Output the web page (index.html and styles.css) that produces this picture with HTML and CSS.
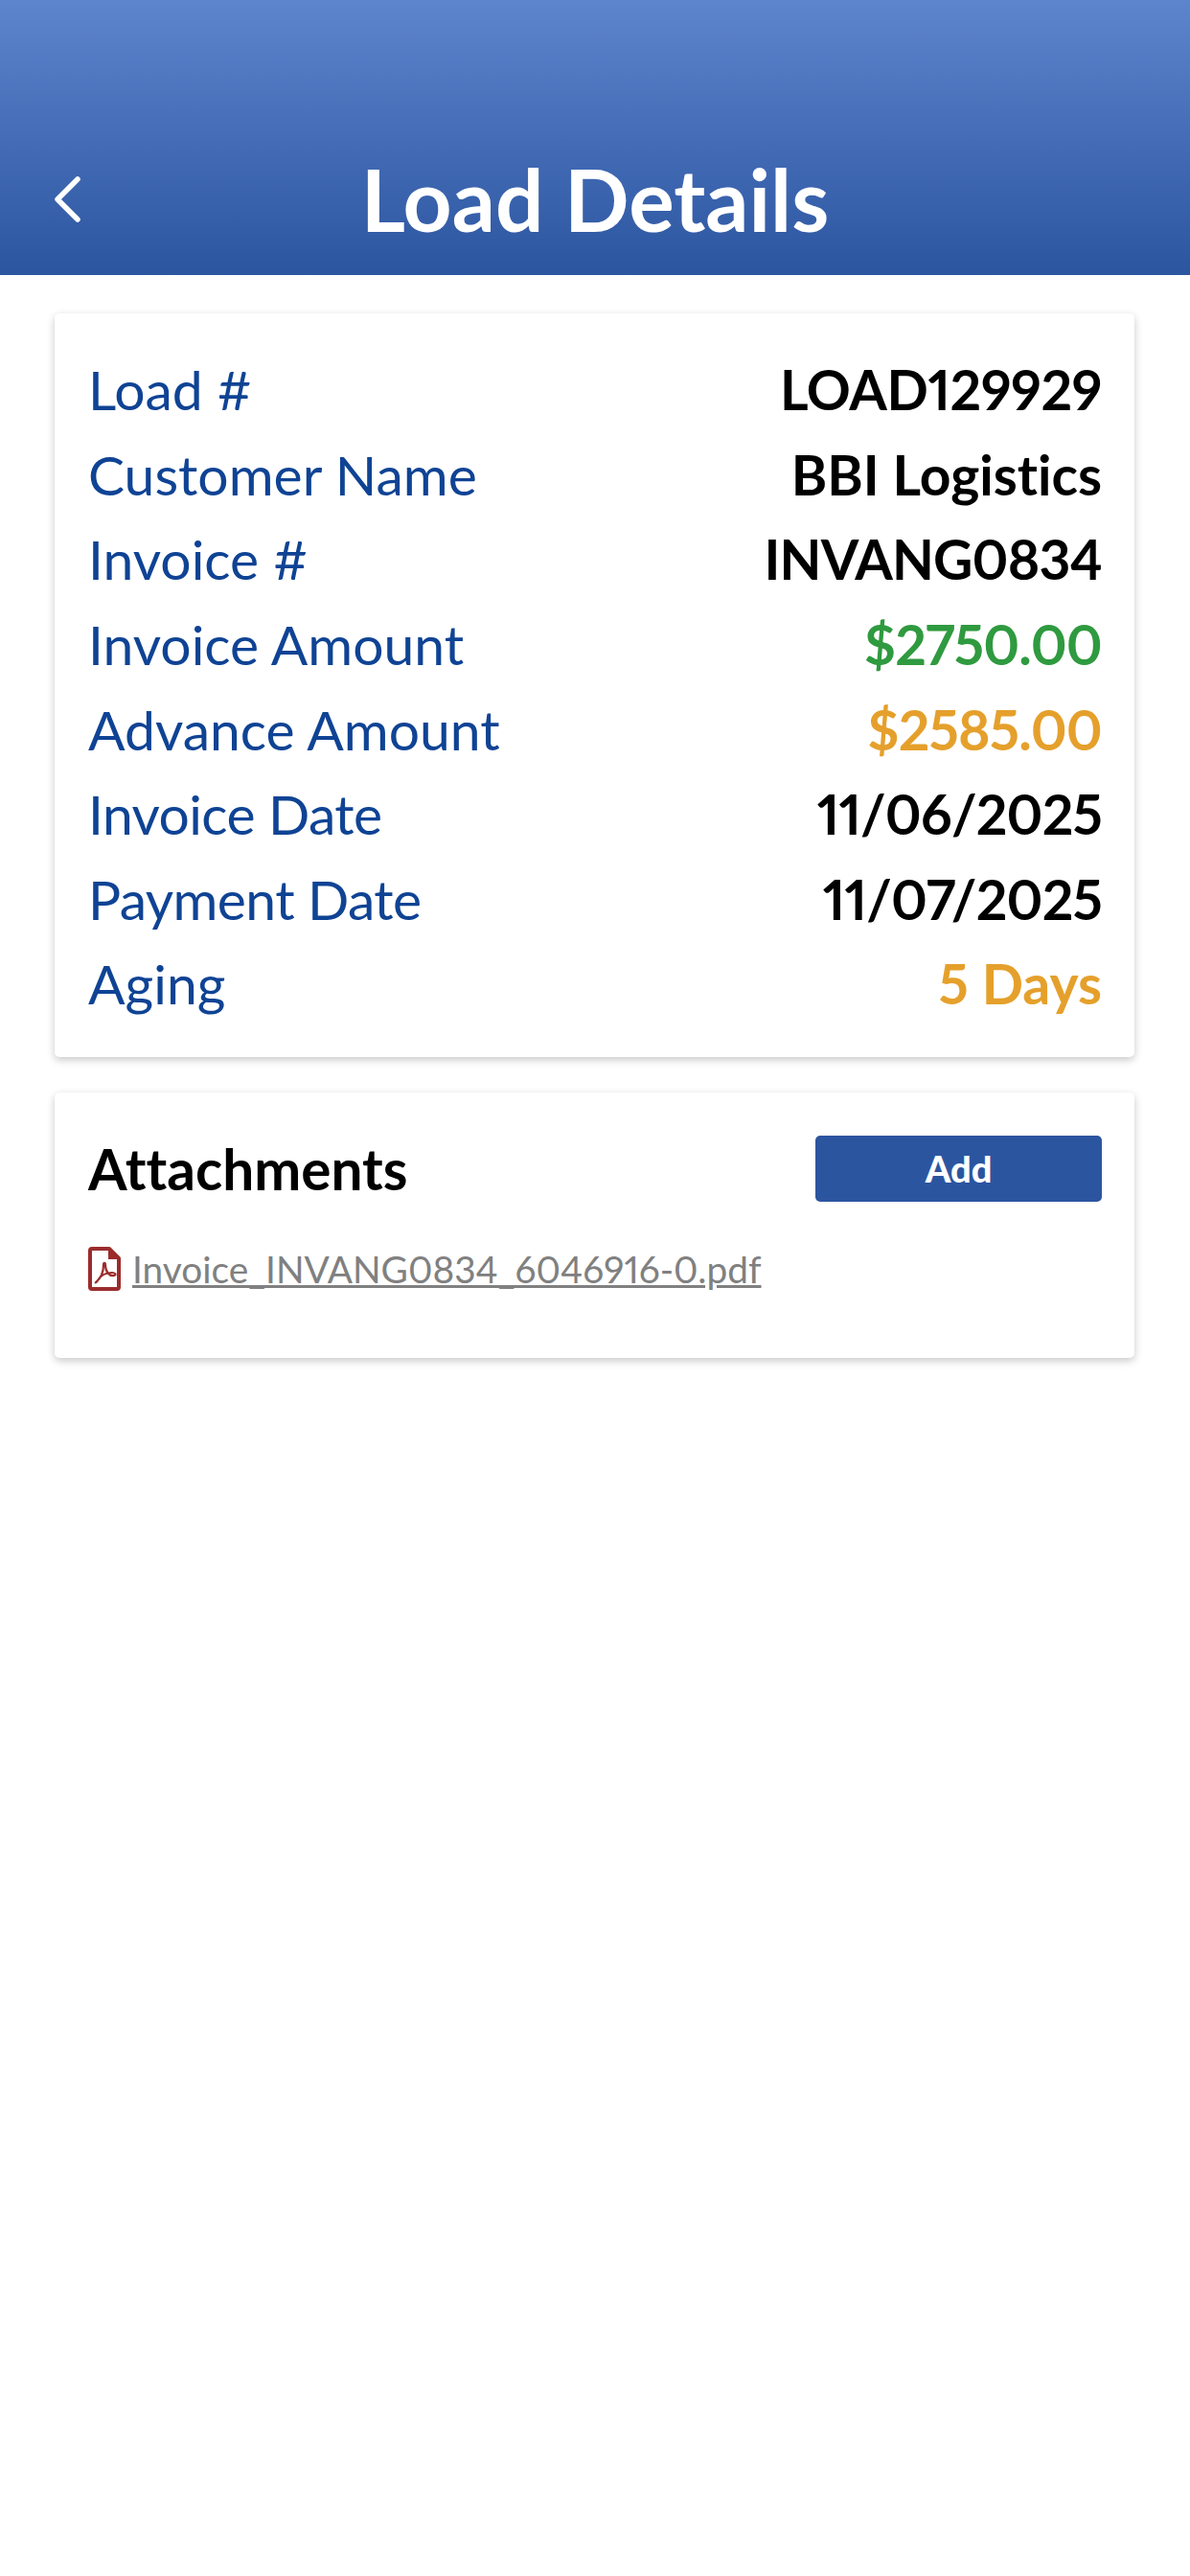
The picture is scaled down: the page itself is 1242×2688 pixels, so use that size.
FILE: index.html
```html
<!DOCTYPE HTML>
<html>
	<head>
		<meta charset="utf-8">
		<title>Load Details</title>
		<link rel="stylesheet" href="styles.css">
	</head>
	<body>
		<div class="header">
			<svg class="back-icon" viewBox="0 0 30 50" width="30" height="50">
				<path d="M26 4 L5 25 L26 46" fill="none" stroke="#fff" stroke-width="5.5" stroke-linecap="round" stroke-linejoin="round"/>
			</svg>
			<div class="header-title">Load Details</div>
		</div>
		<div class="content">
			<div class="card details">
				<div class="row"><span class="label">Load #</span><span class="value slight">LOAD129929</span></div>
				<div class="row"><span class="label">Customer Name</span><span class="value">BBI Logistics</span></div>
				<div class="row"><span class="label">Invoice #</span><span class="value tight">INVANG0834</span></div>
				<div class="row"><span class="label">Invoice Amount</span><span class="value green tight">$2750.00</span></div>
				<div class="row"><span class="label">Advance Amount</span><span class="value orange tight">$2585.00</span></div>
				<div class="row"><span class="label date">Invoice Date</span><span class="value tight">11/06/2025</span></div>
				<div class="row"><span class="label date">Payment Date</span><span class="value tight">11/07/2025</span></div>
				<div class="row"><span class="label">Aging</span><span class="value orange">5 Days</span></div>
			</div>
			<div class="card attachments">
				<div class="attach-head">
					<span class="attach-title">Attachments</span>
					<button class="button">Add</button>
				</div>
				<div class="file">
					<svg class="pdf-icon" viewBox="0 0 34 46" width="34" height="46">
						<path d="M4 2 H22 L32 12 V42 a2 2 0 0 1 -2 2 H4 a2 2 0 0 1 -2 -2 V4 a2 2 0 0 1 2 -2 Z" fill="#fff" stroke="#9b2c2c" stroke-width="4" stroke-linejoin="round"/>
						<path d="M21 2 V13 H32 Z" fill="#9b2c2c"/>
						<path d="M8 37 C13 33 16 26 16 19 C16 16 18 16 18 19 C18 26 22 31 27 30 C30 29 28 27 25 27 C19 27 13 30 10 35 C9 37 7 38 8 37 Z" fill="none" stroke="#9b2c2c" stroke-width="2.2"/>
					</svg>
					<a class="file-name">Invoice_INVANG0834_6046916-0.pdf</a>
				</div>
			</div>
		</div>
	</body>
</html>
```

FILE: styles.css
```css
html, body {
	margin: 0;
	background: #fff;
}
body {
	font-family: "Lato", "Open Sans", sans-serif;
	font-variant-ligatures: none;
	font-variant-numeric: proportional-nums;
	width: 1242px;
	height: 2688px;
	overflow: hidden;
}
.header {
	height: 287px;
	box-sizing: border-box;
	background: linear-gradient(#5d85cd, #2c55a0);
	display: flex;
	align-items: center;
	padding: 128px 0 0 55px;
}
.back-icon {
	flex: none;
}
.header-title {
	flex: 1;
	color: #fff;
	font-size: 89px;
	font-weight: 700;
	text-align: center;
	margin-left: -85px;
}
.content {
	padding: 40px 58px 0 57px;
}
.card {
	background: #fff;
	border-radius: 5px;
	box-shadow: 0 3px 8px rgba(0, 0, 0, 0.22);
}
.details {
	height: 776px;
	box-sizing: border-box;
	padding: 35px 34px 0 35px;
}
.row {
	height: 88.6px;
	display: flex;
	justify-content: space-between;
	align-items: center;
}
.label {
	color: #0f4394;
	font-size: 57px;
}
.date {
	letter-spacing: -0.6px;
}
.value {
	color: #000;
	font-size: 57px;
	font-weight: 700;
}
.tight {
	letter-spacing: -0.8px;
}
.slight {
	letter-spacing: -0.35px;
}
.green {
	color: #2f9a3f;
}
.orange {
	color: #e5a02c;
}
.attachments {
	margin-top: 37px;
	height: 277px;
	box-sizing: border-box;
	padding: 44px 34px 0 35px;
}
.attach-head {
	display: flex;
	justify-content: space-between;
	align-items: center;
}
.attach-title {
	font-size: 58.5px;
	font-weight: 700;
	color: #000;
}
.button {
	width: 299px;
	height: 69px;
	border: 0;
	border-radius: 5px;
	background: #2c55a0;
	color: #fff;
	font-family: inherit;
	font-size: 38px;
	font-weight: 900;
}
.file {
	display: flex;
	align-items: center;
	gap: 12px;
	margin-top: 47px;
}
.file-name {
	color: #808080;
	font-size: 38.8px;
	text-decoration: underline;
}
```
